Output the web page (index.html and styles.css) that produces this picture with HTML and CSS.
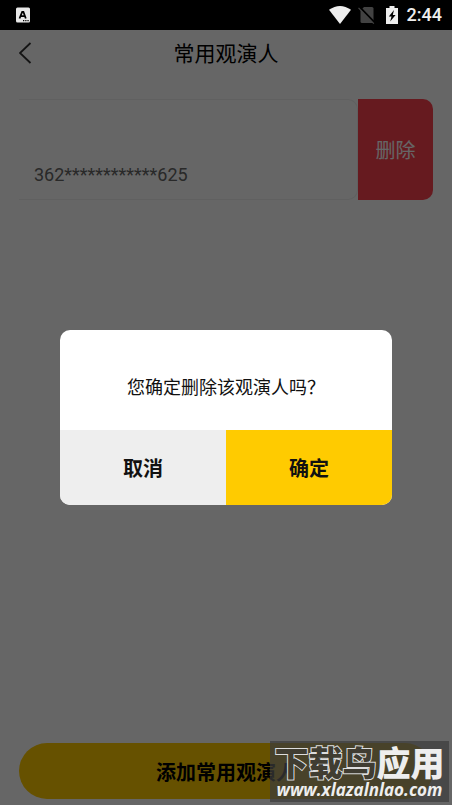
FILE: index.html
```html
<!DOCTYPE html>
<html lang="zh-CN">
<head>
<meta charset="utf-8">
<meta name="viewport" content="width=device-width, initial-scale=1">
<title>常用观演人</title>
<link rel="stylesheet" href="styles.css">
</head>
<body>
<div class="screen">
  <div class="status-bar">
    <svg class="status-app" width="14" height="16" viewBox="0 0 14 16" aria-hidden="true">
      <rect x="0" y="0.5" width="14" height="15" rx="1.5" fill="#e8e8e8"/>
      <path d="M3.500 11.500 6.200 4.800h1.200L9.800 11.500M4.900 9.200h3.800" fill="none" stroke="#000" stroke-width="1.800"/>
      <path d="M7 13.700h1.300M9.200 13.700h1.300M11.400 13.700h1.300" stroke="#000" stroke-width="1.300"/>
    </svg>
    <div class="status-icons">
      <svg width="22" height="18" viewBox="0 0 22 18" aria-hidden="true">
        <path d="M0 3.800Q11-3.800 22 3.800L11 18Z" fill="#eee"/>
      </svg>
      <svg class="sim" width="18" height="18" viewBox="0 0 18 18" aria-hidden="true">
        <path d="M6 1h8q1.500 0 1.500 1.500v13q0 1.500-1.500 1.500H4q-1.500 0-1.500-1.500V4.500Z" fill="#424242"/>
        <path d="M1.500 1 17 17" stroke="#000" stroke-width="2"/>
        <path d="M.5 1.800 15.800 17.600" stroke="#444" stroke-width="1.200"/>
      </svg>
      <svg class="battery" width="12" height="18" viewBox="0 0 12 18" aria-hidden="true">
        <path d="M3.500 0h5v2H12v16H0V2h3.500Z" fill="#eee"/>
        <path d="M8 4 2.800 10.500h2.700L4.200 15.500 9.600 9H6.800Z" fill="#000"/>
      </svg>
      <span class="time">2:44</span>
    </div>
  </div>
  <div class="page">
    <header class="nav">
      <button class="back" type="button" aria-label="返回">
        <svg width="13" height="22" viewBox="0 0 13 22" aria-hidden="true">
          <path d="M11.500 1 1 11l10.500 10" fill="none" stroke="#333" stroke-width="1.800"/>
        </svg>
      </button>
      <h1 class="title">常用观演人</h1>
    </header>
    <main class="list">
      <div class="row">
        <div class="person">362************625</div>
        <button class="delete" type="button">删除</button>
      </div>
    </main>
    <footer class="footer">
      <button class="add" type="button">添加常用观演人</button>
    </footer>
    <div class="scrim">
      <div class="dialog" role="dialog" aria-modal="true" aria-labelledby="question">
        <p class="question" id="question">您确定删除该观演人吗？</p>
        <div class="actions">
          <button class="cancel" type="button">取消</button>
          <button class="confirm" type="button">确定</button>
        </div>
      </div>
    </div>
  </div>
  <div class="watermark">
    <div class="brand"><span class="brand-dark">下载鸟</span>应用</div>
    <div class="site">www.xlazalnlao.com</div>
  </div>
</div>
</body>
</html>
```
FILE: styles.css
```css
* {
  box-sizing: border-box;
}

body {
  margin: 0;
  font-family: Roboto, "Noto Sans CJK SC", sans-serif;
  color: #000;
}

button {
  margin: 0;
  padding: 0;
  border: 0;
  background: none;
  font-family: inherit;
  color: inherit;
}

.screen {
  position: relative;
  display: flex;
  flex-direction: column;
  min-height: 100vh;
}

.status-bar {
  display: flex;
  align-items: center;
  justify-content: space-between;
  height: 30px;
  padding: 0 10px 0 16px;
  background: #000;
}

.status-icons {
  display: flex;
  align-items: center;
}

.sim {
  margin-left: 7px;
}

.battery {
  margin-left: 10px;
}

.time {
  margin-left: 9px;
  font-size: 18px;
  line-height: 32px;
  font-weight: 500;
  color: #eee;
}

.page {
  position: relative;
  display: flex;
  flex: 1;
  flex-direction: column;
  background: #fff;
}

.nav {
  display: grid;
  grid-template-columns: 32px 1fr 32px;
  align-items: center;
  height: 46px;
  padding: 0 19px;
}

.back {
  display: flex;
}

.title {
  margin: 0;
  padding-top: 2px;
  font-size: 21px;
  line-height: 30px;
  font-weight: 400;
  text-align: center;
}

.list {
  flex: 1;
  padding: 23px 19px;
}

.row {
  display: flex;
  height: 101px;
}

.person {
  display: flex;
  flex: 1;
  align-items: flex-end;
  padding: 0 15px 12px;
  border: 1px solid #f0f0f0;
  border-left: 0;
  border-radius: 0 10px 10px 0;
  font-size: 18px;
  line-height: 24px;
  color: #666;
}

.delete {
  width: 75px;
  border-radius: 0 10px 10px 0;
  background: #ff414f;
  font-size: 20px;
  color: #fff;
}

.footer {
  display: flex;
  padding: 0 19px 6px;
}

.add {
  flex: 1;
  height: 56px;
  border-radius: 28px;
  background: #ffcb00;
  font-size: 20px;
  font-weight: 700;
}

.scrim {
  position: absolute;
  inset: 0;
  display: flex;
  align-items: center;
  justify-content: center;
  padding: 0 60px;
  background: rgba(0, 0, 0, 0.6);
}

.dialog {
  flex: 1;
  overflow: hidden;
  border-radius: 10px;
  background: #fff;
}

.question {
  margin: 0;
  padding: 44px 0 28px;
  font-size: 18px;
  line-height: 28px;
  text-align: center;
  color: #111;
}

.actions {
  display: grid;
  grid-template-columns: 1fr 1fr;
  height: 75px;
}

.cancel,
.confirm {
  font-size: 20px;
  font-weight: 700;
  color: #111;
}

.cancel {
  background: #eee;
}

.confirm {
  background: #ffcb00;
}

.watermark {
  position: absolute;
  right: 3px;
  bottom: 3px;
  width: 179px;
  height: 61px;
  padding-top: 7px;
  background: rgba(60, 60, 60, 0.7);
  text-align: center;
  white-space: nowrap;
  color: #eee;
}

.brand {
  font-size: 34px;
  line-height: 32px;
  font-weight: 900;
  font-style: oblique 12deg;
}

.brand-dark {
  color: #403d32;
  -webkit-text-stroke: 2px #ddd;
  paint-order: stroke fill;
}

.site {
  font-family: "Open Sans", sans-serif;
  font-size: 17px;
  line-height: 20px;
  font-weight: 700;
  font-style: italic;
}
```
